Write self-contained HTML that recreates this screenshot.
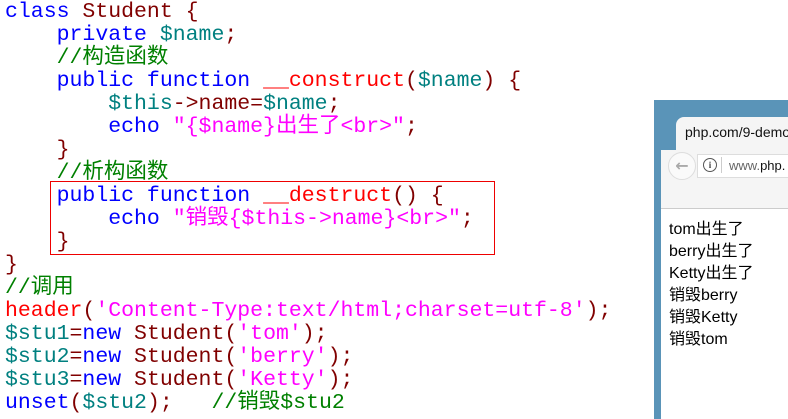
<!DOCTYPE html>
<html><head><meta charset="utf-8"><style>
body{margin:0;width:788px;height:419px;background:#fff;overflow:hidden;position:relative}
pre{margin:0;position:absolute;left:5px;top:1px;font-family:"Liberation Mono","Noto Sans CJK SC",monospace;font-size:21.5px;line-height:23px;color:#000}
.k{color:#0000ff}.v{color:#008080}.c{color:#008000}.f{color:#ff0000}.s{color:#ff00ff}.p{color:#800000}.d{color:#800000}
.box{position:absolute;left:50px;top:181px;width:443px;height:72px;border:1px solid #e00}
.br{position:absolute;left:654px;top:100px;width:134px;height:319px;background:#5a94b8}
.tab{position:absolute;left:676px;top:117px;width:120px;height:34px;background:#f5f5f5;border-radius:8px 0 0 0;font:14px "Liberation Sans",sans-serif;color:#111}
.tb{position:absolute;left:661px;top:150px;width:127px;height:58px;background:#f5f5f5;border-bottom:1px solid #ccc}
.cont{position:absolute;left:661px;top:209px;width:127px;height:210px;background:#fff;font:16px/22px "Liberation Sans","Noto Sans CJK SC",sans-serif;color:#000}
</style></head><body>
<pre><span class="k">class</span> <span class="d">Student {</span>
    <span class="k">private</span> <span class="v">$name</span><span class="p">;</span>
    <span class="c">//构造函数</span>
    <span class="k">public function</span> <span class="f">__construct</span><span class="p">(</span><span class="v">$name</span><span class="p">) {</span>
        <span class="v">$this</span><span class="p">-&gt;name=</span><span class="v">$name</span><span class="p">;</span>
        <span class="k">echo</span> <span class="s">"{$name}出生了&lt;br&gt;"</span><span class="p">;</span>
    <span class="p">}</span>
    <span class="c">//析构函数</span>
    <span class="k">public function</span> <span class="f">__destruct</span><span class="p">() {</span>
        <span class="k">echo</span> <span class="s">"销毁{$this-&gt;name}&lt;br&gt;"</span><span class="p">;</span>
    <span class="p">}</span>
<span class="p">}</span>
<span class="c">//调用</span>
<span class="f">header</span><span class="p">(</span><span class="s">'Content-Type:text/html;charset=utf-8'</span><span class="p">);</span>
<span class="v">$stu1</span><span class="p">=</span><span class="k">new</span> <span class="d">Student(</span><span class="s">'tom'</span><span class="p">);</span>
<span class="v">$stu2</span><span class="p">=</span><span class="k">new</span> <span class="d">Student(</span><span class="s">'berry'</span><span class="p">);</span>
<span class="v">$stu3</span><span class="p">=</span><span class="k">new</span> <span class="d">Student(</span><span class="s">'Ketty'</span><span class="p">);</span>
<span class="k">unset</span><span class="p">(</span><span class="v">$stu2</span><span class="p">);</span>   <span class="c">//销毁$stu2</span></pre>
<div class="box"></div>
<div class="br"></div>
<div class="tab"><span style="position:absolute;left:9px;top:7px;white-space:nowrap">php.com/9-demo.</span></div>
<div class="tb">
<div style="position:absolute;left:7px;top:2px;width:26px;height:26px;border:1px solid #ddd;border-radius:50%;background:#fafafa;color:#aaa;font:bold 16px/26px 'DejaVu Sans',sans-serif;text-align:center">←</div>
<div style="position:absolute;left:36px;top:4px;width:100px;height:22px;background:#fff;border:1px solid #ddd"></div>
<div style="position:absolute;left:42px;top:8px;width:12px;height:12px;border:1px solid #555;border-radius:50%;font:bold 9px/12px 'Liberation Serif',serif;text-align:center;color:#444">i</div>
<div style="position:absolute;left:60px;top:7px;width:1px;height:16px;background:#ccc"></div>
<div style="position:absolute;left:68px;top:8px;font:13px 'Liberation Sans',sans-serif;color:#666;white-space:nowrap">www.<span style="color:#111">php.</span></div>
</div>
<div class="cont"><div style="position:absolute;left:8px;top:10px;white-space:nowrap">tom出生了<br>berry出生了<br>Ketty出生了<br>销毁berry<br>销毁Ketty<br>销毁tom</div></div>
</body></html>
